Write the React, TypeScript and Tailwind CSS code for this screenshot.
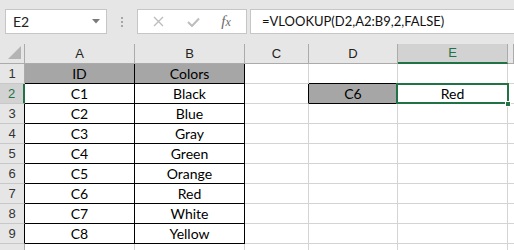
import React from 'react';

const cols = ['A', 'B', 'C', 'D', 'E', 'F'];

const tableData: [string, string][] = [
  ['ID', 'Colors'],
  ['C1', 'Black'],
  ['C2', 'Blue'],
  ['C3', 'Gray'],
  ['C4', 'Green'],
  ['C5', 'Orange'],
  ['C6', 'Red'],
  ['C7', 'White'],
  ['C8', 'Yellow'],
];

const cellFont = { fontFamily: 'Lato, "Liberation Sans", sans-serif' };
const headFont = { fontFamily: '"Liberation Sans", sans-serif' };

const FormulaBar: React.FC = () => (
  <div className="h-[44px] bg-[#e6e6e6] flex items-start pt-[9px] pl-[5px]">
    {/* Name box */}
    <div className="w-[102px] h-[25px] bg-white border border-[#c6c6c6] flex items-center justify-between pl-[7px] pr-[6px]">
      <span className="text-[14px] text-[#222]" style={cellFont}>E2</span>
      <svg width="8" height="5" viewBox="0 0 8 5">
        <path d="M0 0 L8 0 L4 4.5 Z" fill="#7a7a7a" />
      </svg>
    </div>
    {/* grip dots */}
    <div className="w-[30px] h-[25px] flex flex-col items-center justify-center gap-[2px]">
      <span className="w-[2px] h-[2px] bg-[#a6a6a6]" />
      <span className="w-[2px] h-[2px] bg-[#a6a6a6]" />
      <span className="w-[2px] h-[2px] bg-[#a6a6a6]" />
    </div>
    {/* cancel / enter / fx */}
    <div className="w-[110px] h-[25px] bg-white border border-[#c6c6c6] flex items-center">
      <div className="w-[38px] flex justify-center pl-[2px]">
        <svg width="11" height="11" viewBox="0 0 11 11">
          <path d="M1 1 L10 10 M10 1 L1 10" stroke="#bdbdbd" strokeWidth="1.4" />
        </svg>
      </div>
      <div className="w-[34px] flex justify-center">
        <svg width="13" height="10" viewBox="0 0 13 10">
          <path d="M1 5 L5 9 L12 1.5" stroke="#bdbdbd" strokeWidth="2" fill="none" />
        </svg>
      </div>
      <div className="flex-1 flex justify-center pr-[4px]">
        <span
          className="italic text-[15px] text-[#6a6a6a] leading-none"
          style={{ fontFamily: '"Liberation Serif", serif' }}
        >
          f<span className="text-[12px]">x</span>
        </span>
      </div>
    </div>
    {/* formula input */}
    <div className="ml-[3px] flex-1 h-[25px] bg-white border border-[#c6c6c6] border-r-0 flex items-center pl-[11px]">
      <span className="text-[13px] text-[#111]" style={cellFont}>
        =VLOOKUP(D2,A2:B9,2,FALSE)
      </span>
    </div>
  </div>
);

const Sheet: React.FC = () => {
  const rows = Array.from({ length: 10 }, (_, i) => i + 1);
  return (
    <div className="grid grid-cols-[25px_110px_110px_64px_89px_110px_1fr] auto-rows-[20px]">
      {/* corner */}
      <div className="bg-[#e6e6e6] border-r border-b border-[#ababab] flex items-end justify-end pr-[3px] pb-[4px]">
        <svg width="13" height="13" viewBox="0 0 13 13">
          <path d="M13 0 L13 13 L0 13 Z" fill="#b4b4b4" />
        </svg>
      </div>
      {cols.map((c) =>
        c === 'E' ? (
          <div
            key={c}
            className="bg-[#d2d2d2] border-r border-[#ababab] border-b-2 border-b-[#217346] flex items-center justify-center text-[13px] text-[#217346]"
            style={headFont}
          >
            {c}
          </div>
        ) : (
          <div
            key={c}
            className="bg-[#e6e6e6] border-r border-b border-[#ababab] flex items-center justify-center text-[13px] text-[#222]"
            style={headFont}
          >
            {c === 'F' ? '' : c}
          </div>
        )
      )}
      {rows.map((r) => {
        const inTable = r <= 9;
        const data = inTable ? tableData[r - 1] : null;
        const header = r === 1;
        return (
          <React.Fragment key={r}>
            {r === 2 ? (
              <div
                className="bg-[#d2d2d2] border-b border-b-[#c8c8c8] border-r-2 border-r-[#217346] flex items-center justify-center text-[13px] text-[#217346]"
                style={headFont}
              >
                {r}
              </div>
            ) : (
              <div
                className={`bg-[#e6e6e6] border-b border-b-[#c8c8c8] border-r flex items-center justify-center text-[13px] text-[#333] ${
                  inTable && !header ? 'border-r-black' : 'border-r-[#ababab]'
                }`}
                style={headFont}
              >
                {r === 10 ? '' : r}
              </div>
            )}
            {/* A */}
            <div
              className={`border-r border-b flex items-center justify-center text-[14px] text-black ${
                inTable ? 'border-black' : 'border-[#d4d4d4]'
              } ${header ? 'bg-[#a6a6a6]' : ''}`}
              style={cellFont}
            >
              {data ? data[0] : ''}
            </div>
            {/* B */}
            <div
              className={`border-r border-b flex items-center justify-center text-[14px] text-black ${
                inTable ? 'border-black' : 'border-[#d4d4d4]'
              } ${header ? 'bg-[#a6a6a6]' : ''}`}
              style={cellFont}
            >
              {data ? data[1] : ''}
            </div>
            {/* C */}
            <div
              className={`border-r border-b border-b-[#d4d4d4] ${
                r === 2 ? 'border-r-black' : 'border-r-[#d4d4d4]'
              }`}
            />
            {/* D */}
            {r === 2 ? (
              <div
                className="bg-[#a6a6a6] border-r border-b border-black flex items-center justify-center text-[14px] text-black"
                style={cellFont}
              >
                C6
              </div>
            ) : (
              <div
                className={`border-r border-b border-r-[#d4d4d4] ${
                  r === 1 ? 'border-b-black' : 'border-b-[#d4d4d4]'
                }`}
              />
            )}
            {/* E */}
            {r === 2 ? (
              <div className="relative border-r border-b border-[#d4d4d4] flex items-center justify-center text-[14px] text-black" style={cellFont}>
                Red
                <div className="absolute left-[-2px] top-[-1px] right-[-2px] bottom-[-1px] border-2 border-[#217346]" />
                <div className="absolute right-[-4px] bottom-[-4px] w-[6px] h-[6px] bg-[#217346] border border-white" />
              </div>
            ) : (
              <div className="border-r border-b border-[#d4d4d4]" />
            )}
            {/* F */}
            <div className="border-b border-[#d4d4d4]" />
          </React.Fragment>
        );
      })}
    </div>
  );
};

export default function App() {
  return (
    <div className="w-[514px] h-[250px] overflow-hidden bg-white">
      <FormulaBar />
      <Sheet />
    </div>
  );
}
